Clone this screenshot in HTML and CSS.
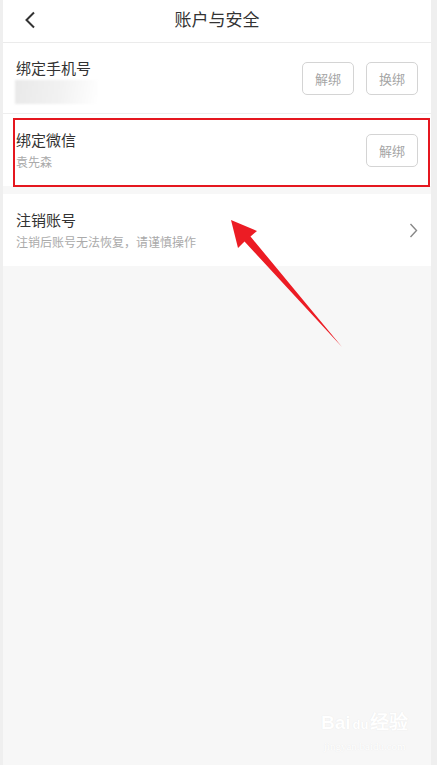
FILE: index.html
```html
<!DOCTYPE html>
<html lang="zh-CN">
<head>
    <meta charset="UTF-8">
    <meta name="viewport" content="width=device-width, initial-scale=1.0">
    <title>账户与安全</title>
    <link rel="stylesheet" href="styles.css">
</head>
<body>
    <div class="page">
        <div class="screen">
            <!-- Barre de titre -->
            <div class="header">
                <svg class="back" width="12" height="18" viewBox="0 0 12 18">
                    <path d="M10 1.5 L2.5 9 L10 16.5" fill="none" stroke="#333" stroke-width="2"/>
                </svg>
                <div class="title">账户与安全</div>
            </div>

            <div class="group">
                <div class="row row-phone">
                    <div class="info">
                        <div class="label">绑定手机号</div>
                        <div class="blur"></div>
                    </div>
                    <div class="actions">
                        <button class="btn">解绑</button>
                        <button class="btn">换绑</button>
                    </div>
                </div>
                <div class="row">
                    <div class="info">
                        <div class="label">绑定微信</div>
                        <div class="sub">袁先森</div>
                    </div>
                    <div class="actions">
                        <button class="btn">解绑</button>
                    </div>
                </div>
            </div>

            <div class="group">
                <div class="row">
                    <div class="info">
                        <div class="label">注销账号</div>
                        <div class="sub">注销后账号无法恢复，请谨慎操作</div>
                    </div>
                    <svg class="chevron" width="9" height="15" viewBox="0 0 9 15">
                        <path d="M1.5 1 L7.5 7.5 L1.5 14" fill="none" stroke="#888" stroke-width="1.4"/>
                    </svg>
                </div>
            </div>
        </div>

        <!-- Annotations par-dessus la capture -->
        <div class="highlight"></div>
        <svg class="arrow" width="437" height="765" viewBox="0 0 437 765">
            <polygon points="231,220 257,231 250.5,236.5 342,347 244.5,241.5 238,248" fill="#ec1c24"/>
        </svg>

        <div class="watermark">
            <div class="wm-logo">Bai<span class="paw">du</span>经验</div>
            <div class="wm-url">jingyan.baidu.com</div>
        </div>
    </div>
</body>
</html>
```

FILE: styles.css
```css
/* Styles de base */
* {
    margin: 0;
    padding: 0;
    box-sizing: border-box;
}

body {
    font-family: "Noto Sans CJK SC", "Noto Sans", sans-serif;
    background: #efefef;
    color: #333;
}

.page {
    position: relative;
    width: 437px;
    height: 765px;
    overflow: hidden;
}

.screen {
    margin: 0 6px 0 3px;
    height: 765px;
    background: #f7f7f7;
}

.header {
    position: relative;
    height: 43px;
    background: #fff;
    border-bottom: 1px solid #ebebeb;
    display: flex;
    align-items: center;
    justify-content: center;
}

.header .back {
    position: absolute;
    left: 21px;
    top: 11px;
}

.header .title {
    font-size: 17px;
    color: #333;
    line-height: 24px;
    margin-top: -4px;
}

.group {
    background: #fff;
    margin-bottom: 8px;
}

.row {
    height: 72px;
    padding: 0 13px;
    display: flex;
    align-items: center;
    justify-content: space-between;
}

.row-phone {
    height: 71px;
    border-bottom: 1px solid #eeeeee;
}

.row-phone .info {
    margin-top: 5px;
}

.info {
    display: flex;
    flex-direction: column;
    gap: 3px;
}

.label {
    font-size: 15px;
    line-height: 20px;
    color: #333;
}

.sub {
    font-size: 12px;
    line-height: 18px;
    color: #aaa;
}

.blur {
    width: 83px;
    height: 24px;
    margin-top: -1px;
    margin-left: -1px;
    background: linear-gradient(100deg, #e9e9e9 0%, #f2f2f2 55%, #ffffff 100%);
    filter: blur(1px);
}

.actions {
    display: flex;
    gap: 12px;
}

.btn {
    width: 52px;
    height: 33px;
    border: 1px solid #d4d4d4;
    border-radius: 5px;
    background: #fff;
    font-family: inherit;
    font-size: 13px;
    color: #a5a5a5;
}

.highlight {
    position: absolute;
    left: 13px;
    top: 118px;
    width: 417px;
    height: 69px;
    border: 2px solid #e5171f;
}

.arrow {
    position: absolute;
    left: 0;
    top: 0;
}

.watermark {
    position: absolute;
    left: 321px;
    top: 708px;
    color: #fff;
    text-shadow: 0 0 1px #e2e2e2;
    text-align: center;
}

.wm-logo {
    font-family: "Liberation Sans", Arial, sans-serif;
    font-size: 19px;
    font-weight: bold;
    line-height: 30px;
}

.wm-logo .paw {
    font-size: 13px;
    margin: 0 2px;
}

.wm-url {
    font-family: "Liberation Serif", serif;
    font-size: 11px;
    line-height: 12px;
}
```
